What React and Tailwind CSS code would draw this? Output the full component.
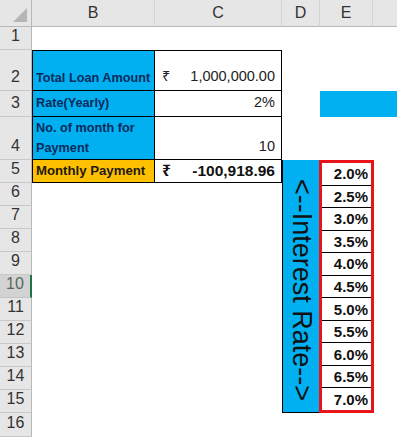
import React from "react";

const rowStarts = [
  "row-start-2",
  "row-start-3",
  "row-start-4",
  "row-start-5",
  "row-start-6",
  "row-start-7",
  "row-start-8",
  "row-start-9",
  "row-start-10",
  "row-start-11",
  "row-start-12",
  "row-start-13",
  "row-start-14",
  "row-start-15",
  "row-start-16",
  "row-start-17",
];

const rates = ["2.0%", "2.5%", "3.0%", "3.5%", "4.0%", "4.5%", "5.0%", "5.5%", "6.0%", "6.5%", "7.0%"];

function ColHead({ label, col }) {
  return (
    <div
      className={`${col} row-start-1 flex items-center justify-center border-r border-b border-r-[#d4d4d4] border-b-[#b8b8b8] bg-[#e6e6e6] text-[16px] text-[#333]`}
    >
      {label}
    </div>
  );
}

function App() {
  return (
    <div className="w-[397px] h-[437px] overflow-hidden bg-white font-['Liberation_Sans','Noto_Sans','DejaVu_Sans',sans-serif]">
      <div className="grid grid-cols-[32px_123px_127px_38px_53px_24px] grid-rows-[27px_23px_41px_26px_43px_23px_23px_23px_23px_23px_23px_23px_23px_23px_23px_23px_24px]">
        {/* corner */}
        <div className="col-start-1 row-start-1 relative bg-[#e6e6e6] border-r border-b border-r-[#b8b8b8] border-b-[#b8b8b8]">
          <svg className="absolute right-[4px] bottom-[4px]" width="14" height="14" viewBox="0 0 14 14">
            <polygon points="14,0 14,14 0,14" fill="#b5b5b5" />
          </svg>
        </div>
        <ColHead label="B" col="col-start-2" />
        <ColHead label="C" col="col-start-3" />
        <ColHead label="D" col="col-start-4" />
        <ColHead label="E" col="col-start-5" />
        <div className="col-start-6 row-start-1 border-b border-b-[#b8b8b8] bg-[#e6e6e6]" />

        {/* row headers */}
        {rowStarts.map((rs, i) =>
          i === 9 ? (
            <div
              key={rs}
              className={`col-start-1 ${rs} flex items-end justify-center pb-[1px] bg-[#d3d3d3] border-b border-b-[#c4c4c4] border-r-2 border-r-[#217346] text-[16px] text-[#56695c]`}
            >
              {i + 1}
            </div>
          ) : (
            <div
              key={rs}
              className={`col-start-1 ${rs} flex items-end justify-center pb-[1px] bg-[#e6e6e6] border-b border-r border-b-[#c8c8c8] border-r-[#b8b8b8] text-[16px] text-[#333]`}
            >
              {i + 1}
            </div>
          )
        )}

        {/* loan table */}
        <div className="col-start-2 row-start-3 flex items-end px-[3px] pb-[2px] bg-[#00b0f0] border border-black text-[12.7px] font-bold text-[#0b2a5c]">
          Total Loan Amount
        </div>
        <div className="col-start-3 row-start-3 flex items-end justify-between pl-[7px] pr-[6px] pb-[2px] border-t border-r border-b border-black text-[14.5px] text-[#222]">
          <span>₹</span>
          <span>1,000,000.00</span>
        </div>
        <div className="col-start-2 row-start-4 flex items-end px-[3px] pb-[3px] bg-[#00b0f0] border-l border-r border-b border-black text-[12.7px] font-bold text-[#0b2a5c]">
          Rate(Yearly)
        </div>
        <div className="col-start-3 row-start-4 flex items-end justify-end pr-[6px] pb-[2px] border-r border-b border-black text-[14.5px] text-[#222]">
          2%
        </div>
        <div className="col-start-2 row-start-5 flex items-end px-[3px] pb-[1px] bg-[#00b0f0] border-l border-r border-b border-black text-[12.7px] leading-[20px] font-bold text-[#0b2a5c]">
          No. of month for Payment
        </div>
        <div className="col-start-3 row-start-5 flex items-end justify-end pr-[6px] pb-[1px] border-r border-b border-black text-[14.5px] text-[#222]">
          10
        </div>
        <div className="col-start-2 row-start-6 flex items-center px-[3px] bg-[#ffc000] border-l border-r border-b border-black text-[13.2px] font-bold text-[#1e1a10]">
          Monthly Payment
        </div>
        <div className="col-start-3 row-start-6 flex items-center justify-between pl-[7px] pr-[6px] border-r border-b border-black text-[15.5px] font-bold text-[#111]">
          <span>₹</span>
          <span>-100,918.96</span>
        </div>

        {/* blue bar E3:F3 */}
        <div className="col-start-5 col-span-2 row-start-4 bg-[#00b0f0]" />

        {/* interest rate label */}
        <div className="col-start-4 row-start-6 row-span-11 flex items-center justify-center bg-[#00b0f0] border border-black border-t-0">
          <span className="[writing-mode:vertical-rl] text-[27px] leading-none pt-[8px] text-[#111]">
            {"<--Interest Rate-->"}
          </span>
        </div>

        {/* rates */}
        <div className="col-start-5 row-start-6 row-span-11 -ml-[1px] -mr-[1px] min-h-0 flex flex-col border-[3px] border-[#e8141a] bg-white">
          {rates.map((r, i) => (
            <div
              key={r}
              className={`flex-1 min-h-0 flex items-center justify-end pr-[3px] text-[15px] leading-none font-bold text-[#111] ${
                i < rates.length - 1 ? "border-b border-black" : ""
              }`}
            >
              {r}
            </div>
          ))}
        </div>
      </div>
    </div>
  );
}

export default App;
